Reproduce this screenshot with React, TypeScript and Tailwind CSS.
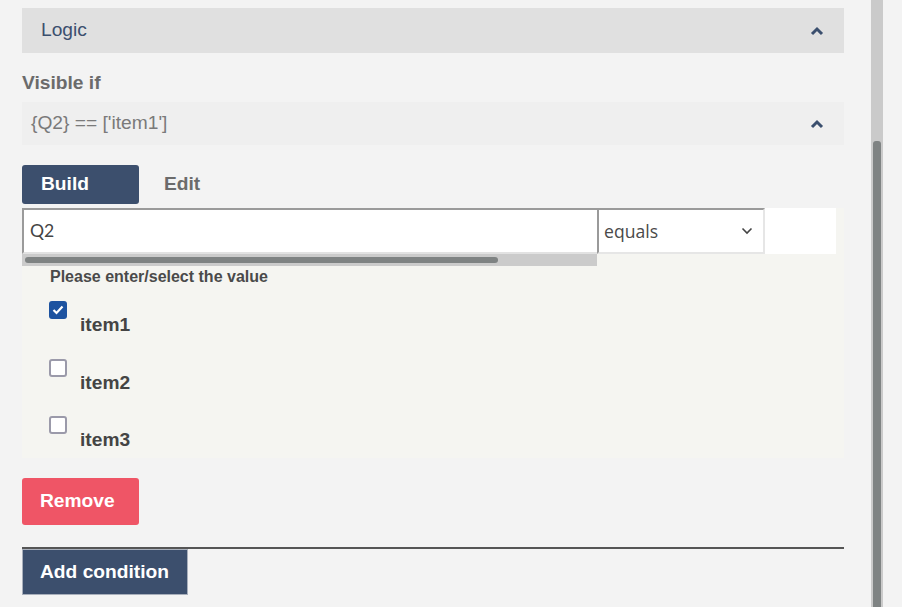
const items = [
  { label: 'item1', checked: true },
  { label: 'item2', checked: false },
  { label: 'item3', checked: false },
];

function ChevronUp() {
  return (
    <svg width="14" height="10" viewBox="0 0 14 10" className="text-[#3b4f6e]">
      <polyline points="2,8 7,3 12,8" fill="none" stroke="currentColor" strokeWidth="3" />
    </svg>
  );
}

function CheckBox({ checked }: { checked: boolean }) {
  if (checked) {
    return (
      <div className="w-[18px] h-[18px] rounded-[3px] bg-[#1d53a0] flex items-center justify-center">
        <svg width="12" height="10" viewBox="0 0 12 10">
          <polyline points="1.5,5 4.5,8 10.5,1.5" fill="none" stroke="white" strokeWidth="2.2" />
        </svg>
      </div>
    );
  }
  return <div className="w-[18px] h-[18px] rounded-[3px] border-2 border-[#9b9aaa] bg-white" />;
}

export default function App() {
  return (
    <div className="w-[902px] h-[607px] bg-[#f3f3f3] flex overflow-hidden font-['Liberation_Sans',Arial,sans-serif]">
      {/* Main column */}
      <div className="w-[871px] pl-[22px] pr-[27px] pt-[8px] flex flex-col">
        <div className="h-[45px] bg-[#e0e0e0] flex items-center justify-between pl-[19px] pr-[20px]">
          <span className="text-[19.2px] text-[#3b4f6e]">Logic</span>
          <ChevronUp />
        </div>

        <div className="mt-[19px] h-[22px] flex items-center text-[19.2px] font-bold text-[#6b6b6b]">Visible if</div>

        <div className="mt-[8px] h-[43px] bg-[#efefef] flex items-center justify-between pl-[9px] pr-[20px]">
          <span className="text-[19.2px] text-[#7a7a7a]">{"{Q2} == ['item1']"}</span>
          <ChevronUp />
        </div>

        {/* Tabs */}
        <div className="mt-[20px] flex items-center">
          <div className="w-[117px] h-[39px] rounded-[3px] bg-[#3c4f6d] text-white text-[19.2px] font-bold flex items-center pl-[19px]">
            Build
          </div>
          <div className="ml-[25px] text-[19.2px] font-bold text-[#6b6b6b]">Edit</div>
        </div>

        {/* Condition panel */}
        <div className="mt-[4px] h-[250px] bg-[#f5f5f1] flex flex-col">
          <div className="flex">
            <div className="w-[575px] flex flex-col">
              <div className="h-[46px] bg-white border-2 border-[#9a9a9a] border-b-[#e2e2e2] border-r-0 flex items-center pl-[6px] text-[17.6px] text-[#444] font-['Lato',sans-serif]">
                Q2
              </div>
              <div className="h-[12px] bg-[#cbcbcb] px-[3px] flex items-center">
                <div className="w-[473px] h-[6px] rounded-full bg-[#7f8383]" />
              </div>
            </div>
            <div className="w-[168px] h-[46px] bg-white border-2 border-[#9a9a9a] border-b-[#e6e6e6] border-r-[#e6e6e6] flex items-center justify-between pl-[5px] pr-[10px] text-[17.6px] text-[#4a4a4a] font-['Open_Sans',sans-serif]">
              <span>equals</span>
              <svg width="12" height="8" viewBox="0 0 12 8">
                <polyline points="1.5,1.5 6,6 10.5,1.5" fill="none" stroke="#444" strokeWidth="1.6" />
              </svg>
            </div>
            <div className="w-[71px] h-[46px] bg-white" />
          </div>

          <div className="mt-[1px] pl-[28px] text-[16px] font-bold text-[#4a4a4a] leading-[20px]">
            Please enter/select the value
          </div>

          <div className="mt-[14px] flex flex-col gap-[39.5px] pl-[27px]">
            {items.map((item) => (
              <div key={item.label} className="relative h-[18px]">
                <CheckBox checked={item.checked} />
                <span className="absolute left-[31px] top-[13px] text-[19.2px] font-bold text-[#444] leading-[22px]">
                  {item.label}
                </span>
              </div>
            ))}
          </div>
        </div>

        <div className="mt-[20px] w-[117px] h-[47px] rounded-[3px] bg-[#ef5566] text-white text-[19.2px] font-bold flex items-center pl-[18px]">
          Remove
        </div>

        <div className="mt-[22px] border-t-2 border-[#555]" />
        <div className="w-[166px] h-[46px] bg-[#3c4f6d] border border-[#a8afbb] text-white text-[19.2px] font-bold flex items-center pl-[17px]">
          Add condition
        </div>
      </div>

      {/* Page scrollbar */}
      <div className="w-[12px] h-full bg-[#cacaca] flex flex-col pt-[141px] px-[2px]">
        <div className="flex-1 bg-[#7f8383] rounded-t-[3px]" />
      </div>
    </div>
  );
}
